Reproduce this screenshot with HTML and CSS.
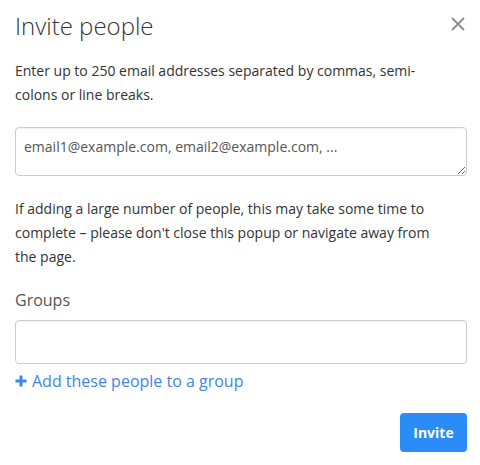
FILE: index.html
```
<!DOCTYPE html>
<html>
<head>
<meta charset="utf-8">
<link rel="stylesheet" href="styles.css">
</head>
<body>
<div class="modal">
  <div class="header">
    <h1 class="title">Invite people</h1>
    <button class="close" aria-label="Close">
      <svg width="14" height="14" viewBox="0 0 14 14"><path d="M1 1L13 13M13 1L1 13" stroke="#8a8f98" stroke-width="2" fill="none"/></svg>
    </button>
  </div>
  <p class="intro">Enter up to 250 email addresses separated by commas, semi-colons or line breaks.</p>
  <textarea class="emails" placeholder="email1@example.com, email2@example.com, ..."></textarea>
  <p class="note">If adding a large number of people, this may take some time to complete – please don't close this popup or navigate away from<br>the page.</p>
  <label class="label">Groups</label>
  <input class="groups" type="text">
  <a class="add-link" href="#"><svg class="plus" width="12" height="12" viewBox="0 0 12 12"><path d="M6 0.5V11.5M0.5 6H11.5" stroke="#3f86e8" stroke-width="3"/></svg>Add these people to a group</a>
  <div class="footer">
    <button class="invite">Invite</button>
  </div>
</div>
</body>
</html>
```
FILE: styles.css
```
* { box-sizing: border-box; }
html, body { margin: 0; padding: 0; background: #fff; }
body { font-family: "Open Sans", "DejaVu Sans", sans-serif; color: #333; }
.modal { width: 480px; padding: 10px 13px 0 15px; display: flex; flex-direction: column; }
.header { display: flex; justify-content: space-between; align-items: flex-start; }
.title { margin: 0; font-size: 24px; font-weight: 300; line-height: 32px; color: #333; }
.close { border: 0; background: none; padding: 0; margin: 7px 2px 0 0; width: 14px; height: 14px; display: block; }
.close svg { display: block; }
.intro { margin: 17px 0 0; max-width: 440px; font-size: 14px; line-height: 24px; }
.emails { margin-top: 20px; width: 100%; height: 49px; border: 1px solid #ccc; border-radius: 4px; padding: 9px 8px 7px; font-family: inherit; font-size: 14px; line-height: 20px; color: #333; resize: vertical; display: block; box-shadow: inset 0 1px 1px rgba(0,0,0,0.06); }
.emails::placeholder { color: #555; }
.note { margin: 21px 0 0; font-size: 14px; line-height: 24px; }
.label { margin-top: 19px; font-size: 16px; line-height: 24px; color: #555; display: block; }
.groups { margin-top: 8px; width: 100%; height: 44px; border: 1px solid #ccc; border-radius: 4px; display: block; box-shadow: inset 0 1px 1px rgba(0,0,0,0.06); }
.add-link { margin-top: 5px; font-size: 16px; line-height: 24px; color: #3f86e8; text-decoration: none; display: flex; align-items: center; }
.plus { margin-right: 5px; }
.footer { margin-top: 20px; display: flex; justify-content: flex-end; }
.invite { width: 67px; height: 39px; border: 0; border-radius: 4px; background: #2b8cf7; color: #fff; font-family: inherit; font-size: 14px; font-weight: 700; padding: 0; }
```
